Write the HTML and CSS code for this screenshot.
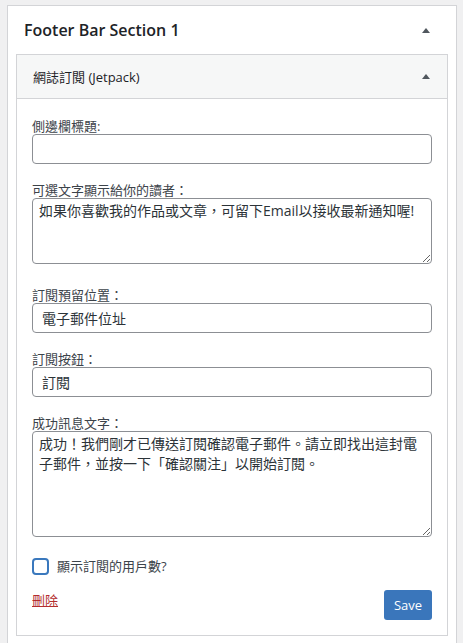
FILE: index.html
```html
<!DOCTYPE html>
<html lang="zh-Hant">
<head>
<meta charset="utf-8">
<title>Footer Bar Section 1</title>
<link rel="stylesheet" href="styles.css">
</head>
<body>
<div class="panel">
  <div class="panel-head">
    <h2 class="panel-title">Footer Bar Section 1</h2>
    <svg class="arrow" width="8" height="5" viewBox="0 0 8 5"><polygon points="4,0 8,5 0,5" fill="#50575e"/></svg>
  </div>
  <div class="widget">
    <div class="widget-top">
      <h3 class="widget-title">網誌訂閱 (Jetpack)</h3>
      <svg class="arrow" width="8" height="5" viewBox="0 0 8 5"><polygon points="4,0 8,5 0,5" fill="#50575e"/></svg>
    </div>
    <div class="widget-body">
      <div class="field">
        <label class="field-label">側邊欄標題:</label>
        <input class="text-input" type="text" value="">
      </div>
      <div class="field field-tall">
        <label class="field-label">可選文字顯示給你的讀者：</label>
        <textarea class="text-area area-short">如果你喜歡我的作品或文章，可留下Email以接收最新通知喔!</textarea>
      </div>
      <div class="field">
        <label class="field-label">訂閱預留位置：</label>
        <input class="text-input" type="text" value="電子郵件位址">
      </div>
      <div class="field">
        <label class="field-label">訂閱按鈕：</label>
        <input class="text-input" type="text" value="訂閱">
      </div>
      <div class="field field-last">
        <label class="field-label">成功訊息文字：</label>
        <textarea class="text-area area-long">成功！我們剛才已傳送訂閱確認電子郵件。請立即找出這封電子郵件，並按一下「確認關注」以開始訂閱。</textarea>
      </div>
      <div class="check-row">
        <span class="checkbox"></span>
        <span class="check-label">顯示訂閱的用戶數?</span>
      </div>
      <div class="actions">
        <a class="delete-link" href="#">刪除</a>
        <button class="save-btn" type="button">Save</button>
      </div>
    </div>
  </div>
</div>
</body>
</html>
```

FILE: styles.css
```css
html, body {
  margin: 0;
  padding: 0;
}
body {
  background: #f0f0f1;
  font-family: "Open Sans", "Noto Sans CJK TC", sans-serif;
  font-size: 13px;
  color: #3c434a;
}
.panel {
  margin: 5px 0 0 7px;
  width: 450px;
  box-sizing: border-box;
  border: 1px solid #d3d4d7;
  background: #fff;
  padding: 0 8px 30px;
}
.panel-head {
  height: 48px;
  display: flex;
  align-items: center;
  justify-content: space-between;
  padding: 0 18px 0 8px;
}
.panel-title {
  margin: 0;
  font-size: 16px;
  font-weight: 600;
  color: #1d2327;
}
.arrow {
  display: block;
}
.widget {
  border: 1px solid #d3d4d7;
  background: #fff;
}
.widget-top {
  height: 43px;
  box-sizing: content-box;
  background: #f6f7f7;
  border-bottom: 1px solid #d3d4d7;
  display: flex;
  align-items: center;
  justify-content: space-between;
  padding: 0 17px 0 16px;
}
.widget-title {
  margin: 0;
  font-size: 13px;
  font-weight: 400;
  color: #1d2327;
}
.widget-body {
  padding: 19px 15px 15px;
}
.field {
  margin-bottom: 18px;
}
.field-tall {
  margin-bottom: 23px;
}
.field-last {
  margin-bottom: 20px;
}
.field-label {
  display: block;
  line-height: 16px;
  font-size: 13px;
  color: #3c434a;
}
.text-input,
.text-area {
  display: block;
  width: 100%;
  box-sizing: border-box;
  margin: 0;
  border: 1px solid #8c8f94;
  border-radius: 4px;
  background: #fff;
  font-family: "Open Sans", "Noto Sans CJK TC", sans-serif;
  font-size: 14px;
  color: #2c3338;
  outline: none;
}
.text-input {
  height: 30px;
  padding: 0 9px;
  line-height: 28px;
}
.text-area {
  padding: 2px 6px;
  line-height: 20px;
  resize: vertical;
  overflow: hidden;
}
.area-short {
  height: 66px;
}
.area-long {
  height: 106px;
}
.check-row {
  display: flex;
  align-items: center;
  gap: 8px;
  margin-bottom: 15px;
}
.checkbox {
  display: block;
  width: 17px;
  height: 17px;
  box-sizing: border-box;
  border: 2px solid #3a78bd;
  border-radius: 4px;
  background: #fff;
}
.check-label {
  font-size: 13px;
  line-height: 18px;
  color: #3c434a;
}
.actions {
  display: flex;
  justify-content: space-between;
  align-items: flex-start;
}
.delete-link {
  line-height: 20px;
  font-size: 13px;
  color: #b32d2e;
  text-decoration: underline;
}
.save-btn {
  width: 48px;
  height: 30px;
  padding: 0;
  border: none;
  border-radius: 3px;
  background: #3a76bb;
  color: #fff;
  font-family: "Open Sans", "Noto Sans CJK TC", sans-serif;
  font-size: 13px;
  cursor: pointer;
}
```
